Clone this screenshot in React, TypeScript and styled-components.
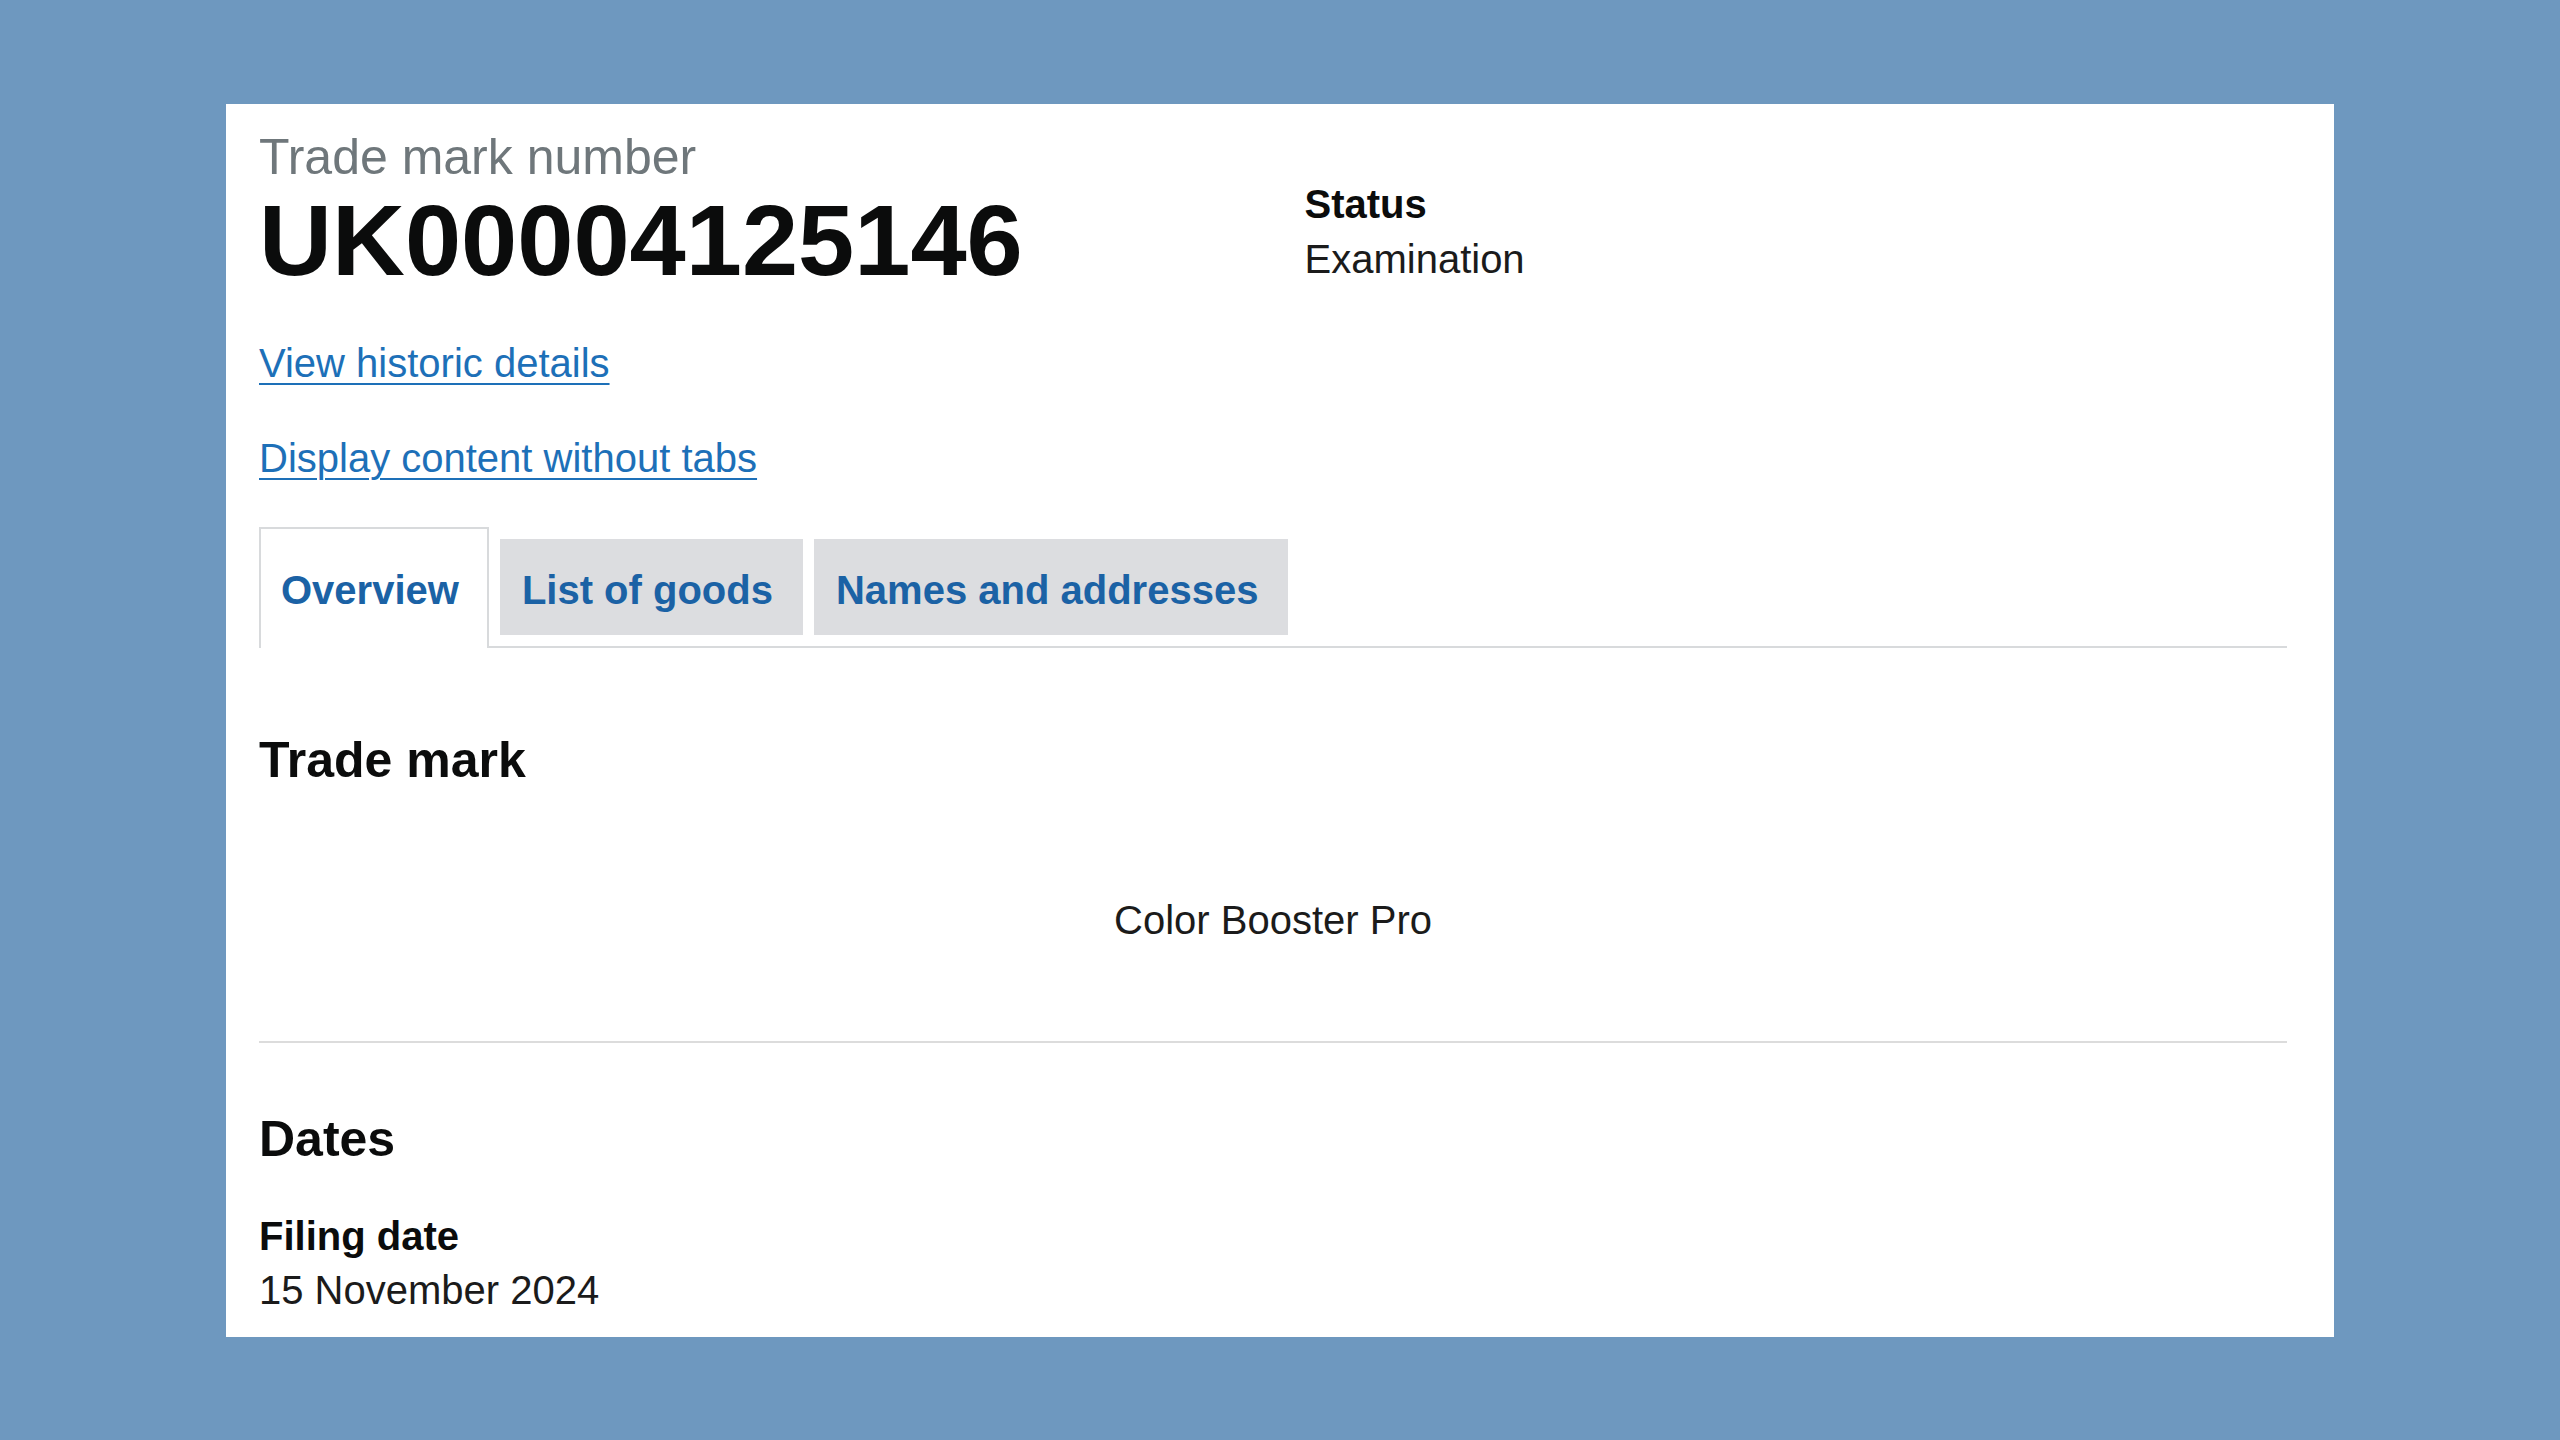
import React from 'react'
import styled, { createGlobalStyle } from 'styled-components'

const GlobalStyle = createGlobalStyle`
    html, body {
        margin: 0;
        padding: 0;
    }
    body {
        background: #6e98bf;
        font-family: "Liberation Sans", Arial, Helvetica, sans-serif;
        color: #0b0c0c;
    }
`

const Page = styled.div`
    padding: 104px 226px;
`

const Card = styled.main`
    background: #ffffff;
    padding: 23px 47px 22px 33px;
`

const Header = styled.div`
    display: grid;
    grid-template-columns: 1fr 1fr;
    column-gap: 63px;
`

const Caption = styled.span`
    display: block;
    font-size: 50px;
    line-height: 60px;
    color: #6f777b;
`

const Title = styled.h1`
    margin: 0;
    font-size: 101px;
    line-height: 106px;
    font-weight: 700;
    color: #0b0c0c;
`

const StatusList = styled.dl`
    margin: 52px 0 0 0;
`

const Term = styled.dt`
    font-size: 40px;
    line-height: 50px;
    font-weight: 700;
    color: #0b0c0c;
`

const Value = styled.dd<{ $gap?: number }>`
    margin: ${p => p.$gap ?? 5}px 0 0 0;
    font-size: 40px;
    line-height: 50px;
    color: #1b1b1b;
`

const LinkRow = styled.p`
    margin: 45px 0 0 0;
    font-size: 40px;
    line-height: 50px;
`

const Link = styled.a`
    color: #1d70b8;
    text-decoration: underline;
    text-decoration-thickness: 2px;
    text-underline-offset: 6px;
`

const TabList = styled.ul`
    list-style: none;
    margin: 44px 0 0 0;
    padding: 0;
    display: flex;
    align-items: flex-start;
    gap: 11px;
    border-bottom: 2px solid #d8dadc;
`

const Tab = styled.li<{ $selected?: boolean }>`
    font-size: 40px;
    line-height: 50px;
    font-weight: 700;
    ${p => p.$selected
        ? `
        background: #ffffff;
        border: 2px solid #d8dadc;
        border-bottom: 0;
        padding: 36px 28px 33px 20px;
        margin-bottom: -2px;
    `
        : `
        background: #dcdde0;
        margin-top: 12px;
        padding: 26px 30px 20px 22px;
    `}
`

const TabLink = styled.a`
    color: #1b62a5;
    text-decoration: none;
`

const Panel = styled.section`
    padding-top: 82px;
`

const SectionHeading = styled.h2<{ $top?: number }>`
    margin: ${p => p.$top ?? 0}px 0 0 0;
    font-size: 50px;
    line-height: 60px;
    font-weight: 700;
    color: #0b0c0c;
`

const MarkText = styled.p`
    margin: 105px 0 0 0;
    text-align: center;
    font-size: 40px;
    line-height: 50px;
    color: #1b1b1b;
`

const Divider = styled.hr`
    margin: 96px 0 0 0;
    border: 0;
    border-top: 2px solid #dcdcdc;
`

const SummaryList = styled.dl`
    margin: 42px 0 0 0;
`

const tabs = ['Overview', 'List of goods', 'Names and addresses']

export default function App() {
    return (
        <Page>
            <GlobalStyle />
            <Card>
                <Header>
                    <div>
                        <Caption>Trade mark number</Caption>
                        <Title>UK00004125146</Title>
                    </div>
                    <StatusList>
                        <Term>Status</Term>
                        <Value>Examination</Value>
                    </StatusList>
                </Header>

                <LinkRow>
                    <Link href="#">View historic details</Link>
                </LinkRow>
                <LinkRow>
                    <Link href="#">Display content without tabs</Link>
                </LinkRow>

                <TabList>
                    {tabs.map((t, i) => (
                        <Tab key={t} $selected={i === 0}>
                            <TabLink href="#">{t}</TabLink>
                        </Tab>
                    ))}
                </TabList>

                <Panel>
                    <SectionHeading>Trade mark</SectionHeading>
                    <MarkText>Color Booster Pro</MarkText>
                    <Divider />
                    <SectionHeading $top={66}>Dates</SectionHeading>
                    <SummaryList>
                        <Term>Filing date</Term>
                        <Value $gap={4}>15 November 2024</Value>
                    </SummaryList>
                </Panel>
            </Card>
        </Page>
    )
}
